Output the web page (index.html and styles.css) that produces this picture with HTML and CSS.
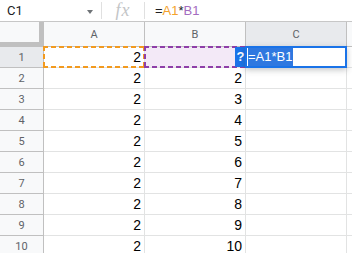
FILE: index.html
```html
<!DOCTYPE html>
<html>
<head>
<meta charset="utf-8">
<link rel="stylesheet" href="styles.css">
</head>
<body>
<div class="app">
  <div class="fbar">
    <div class="namebox"><span class="name">C1</span><span class="caret"></span></div>
    <div class="sep"></div>
    <div class="fx">fx</div>
    <div class="sep"></div>
    <div class="formula">=<span class="ref-a">A1</span>*<span class="ref-b">B1</span></div>
  </div>
  <div class="grid">
    <div class="row head">
      <div class="corner"></div>
      <div class="ch">A</div>
      <div class="ch">B</div>
      <div class="ch ch-sel">C</div>
      <div class="ch ch-d"></div>
    </div>
    <div class="row">
      <div class="rh rh-sel">1</div>
      <div class="cell hl-a">2</div>
      <div class="cell hl-b"></div>
      <div class="cell active">
        <span class="qbadge">?</span>
        <div class="editor"><span class="sel">=A1*B1</span></div>
      </div>
      <div class="cell d"></div>
    </div>
    <div class="row"><div class="rh">2</div><div class="cell">2</div><div class="cell">2</div><div class="cell"></div><div class="cell d"></div></div>
    <div class="row"><div class="rh">3</div><div class="cell">2</div><div class="cell">3</div><div class="cell"></div><div class="cell d"></div></div>
    <div class="row"><div class="rh">4</div><div class="cell">2</div><div class="cell">4</div><div class="cell"></div><div class="cell d"></div></div>
    <div class="row"><div class="rh">5</div><div class="cell">2</div><div class="cell">5</div><div class="cell"></div><div class="cell d"></div></div>
    <div class="row"><div class="rh">6</div><div class="cell">2</div><div class="cell">6</div><div class="cell"></div><div class="cell d"></div></div>
    <div class="row"><div class="rh">7</div><div class="cell">2</div><div class="cell">7</div><div class="cell"></div><div class="cell d"></div></div>
    <div class="row"><div class="rh">8</div><div class="cell">2</div><div class="cell">8</div><div class="cell"></div><div class="cell d"></div></div>
    <div class="row"><div class="rh">9</div><div class="cell">2</div><div class="cell">9</div><div class="cell"></div><div class="cell d"></div></div>
    <div class="row"><div class="rh">10</div><div class="cell">2</div><div class="cell">10</div><div class="cell"></div><div class="cell d"></div></div>
  </div>
</div>
</body>
</html>
```
FILE: styles.css
```css
html, body {
  margin: 0;
  padding: 0;
  background: #fff;
}
.app {
  width: 352px;
  height: 253px;
  overflow: hidden;
  font-family: Roboto, "Liberation Sans", Arial, sans-serif;
  color: #202124;
}
.fbar {
  display: flex;
  align-items: center;
  height: 21px;
  border-bottom: 1px solid #c7c7c7;
  background: #fff;
}
.namebox {
  width: 101px;
  display: flex;
  align-items: center;
  box-sizing: border-box;
  padding-left: 7px;
  padding-right: 8px;
}
.name {
  font-size: 13px;
  flex: 1;
}
.caret {
  width: 0;
  height: 0;
  border-left: 3.5px solid transparent;
  border-right: 3.5px solid transparent;
  border-top: 4px solid #6f7377;
  margin-top: 2px;
}
.sep {
  width: 1px;
  height: 17px;
  background: #e0e0e0;
}
.fx {
  width: 42px;
  text-align: center;
  font-family: "Liberation Serif", serif;
  font-style: italic;
  font-size: 18px;
  color: #c3c5c7;
  line-height: 21px;
  letter-spacing: 1px;
}
.formula {
  padding-left: 10px;
  font-family: "Liberation Sans", Arial, sans-serif;
  font-size: 13px;
  color: #202124;
}
.ref-a { color: #f4a22c; }
.ref-b { color: #a36cc0; }

.grid {
  display: flex;
  flex-direction: column;
}
.row {
  display: flex;
  height: 21px;
}
.row.head {
  height: 25px;
}
.corner {
  width: 44px;
  flex: none;
  box-sizing: border-box;
  background: #f8f9fa;
  border-right: 5px solid #c0c0c0;
  border-bottom: 5px solid #c0c0c0;
}
.ch {
  width: 101px;
  flex: none;
  box-sizing: border-box;
  background: #f8f9fa;
  border-right: 1px solid #c0c0c0;
  border-bottom: 1px solid #c0c0c0;
  font-size: 11px;
  color: #5f6368;
  display: flex;
  align-items: center;
  justify-content: center;
}
.ch-sel {
  background: #e8eaed;
}
.ch-d {
  flex: 1;
  width: auto;
  border-right: none;
}
.rh {
  width: 44px;
  flex: none;
  box-sizing: border-box;
  background: #f8f9fa;
  border-right: 1px solid #c0c0c0;
  border-bottom: 1px solid #c0c0c0;
  font-size: 11px;
  color: #5f6368;
  display: flex;
  align-items: center;
  justify-content: center;
}
.rh-sel {
  background: #e8eaed;
}
.cell {
  width: 101px;
  flex: none;
  box-sizing: border-box;
  border-right: 1px solid #e2e3e3;
  border-bottom: 1px solid #e2e3e3;
  font-family: "Liberation Sans", Arial, sans-serif;
  font-size: 14px;
  color: #000;
  text-align: right;
  padding-right: 3px;
  line-height: 21px;
  position: relative;
}
.cell.d {
  flex: 1;
  width: auto;
  border-right: none;
}
.hl-a::after,
.hl-b::after {
  content: "";
  position: absolute;
  left: -1px;
  top: -1px;
  right: -1px;
  bottom: -1px;
  pointer-events: none;
}
.hl-a::after {
  background:
    repeating-linear-gradient(90deg, #f29a1f 0 5px, transparent 5px 8px) top left / 100% 2px no-repeat,
    repeating-linear-gradient(90deg, #f29a1f 0 5px, transparent 5px 8px) bottom left / 100% 2px no-repeat,
    repeating-linear-gradient(180deg, #f29a1f 0 5px, transparent 5px 8px) top left / 2px 100% no-repeat,
    repeating-linear-gradient(180deg, #f29a1f 0 5px, transparent 5px 8px) top right / 2px 100% no-repeat;
}
.hl-b {
  background: #f3e9f7;
}
.hl-b::after {
  background:
    repeating-linear-gradient(90deg, #8e3fa8 0 5px, transparent 5px 8px) top left / 100% 2px no-repeat,
    repeating-linear-gradient(90deg, #8e3fa8 0 5px, transparent 5px 8px) bottom left / 100% 2px no-repeat,
    repeating-linear-gradient(180deg, #8e3fa8 0 5px, transparent 5px 8px) top left / 2px 100% no-repeat,
    repeating-linear-gradient(180deg, #8e3fa8 0 5px, transparent 5px 8px) top right / 2px 100% no-repeat;
}
.active {
  z-index: 2;
}
.qbadge {
  position: absolute;
  left: -11px;
  top: 0;
  width: 11px;
  height: 20px;
  background: #1a73e8;
  color: #fff;
  font-family: "Liberation Sans", Arial, sans-serif;
  font-weight: bold;
  font-size: 13px;
  line-height: 20px;
  text-align: center;
}
.editor {
  position: absolute;
  left: -1px;
  top: -1px;
  width: 102px;
  height: 22px;
  box-sizing: border-box;
  border: 2px solid #1a73e8;
  background: #fff;
  box-shadow: 0 2px 6px rgba(60, 64, 67, 0.3);
  text-align: left;
  padding-left: 1px;
  line-height: 18px;
  font-size: 13px;
}
.sel {
  background: #2f78e0;
  color: #fff;
  display: inline-block;
  line-height: 18px;
  padding-right: 1px;
}
```
